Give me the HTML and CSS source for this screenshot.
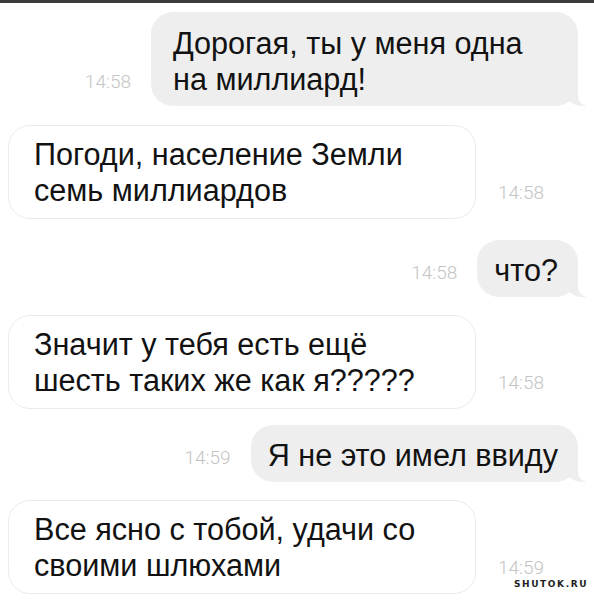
FILE: index.html
```html
<!DOCTYPE html>
<html lang="ru">
<head>
<meta charset="utf-8">
<title>Чат</title>
<link rel="stylesheet" href="styles.css">
</head>
<body>
<div class="topbar"></div>
<div class="chat">
  <div class="row row-out r1">
    <span class="time">14:58</span>
    <div class="bubble bubble-out b1">Дорогая, ты у меня одна<br>на миллиард!</div>
  </div>
  <div class="row row-in r2">
    <div class="bubble bubble-in">Погоди, население Земли<br>семь миллиардов</div>
    <span class="time">14:58</span>
  </div>
  <div class="row row-out r3">
    <span class="time">14:58</span>
    <div class="bubble bubble-out">что?</div>
  </div>
  <div class="row row-in r4">
    <div class="bubble bubble-in">Значит у тебя есть ещё<br>шесть таких же как я?????</div>
    <span class="time">14:58</span>
  </div>
  <div class="row row-out r5">
    <span class="time">14:59</span>
    <div class="bubble bubble-out">Я не это имел ввиду</div>
  </div>
  <div class="row row-in r6">
    <div class="bubble bubble-in">Все ясно с тобой, удачи со<br>своими шлюхами</div>
    <span class="time">14:59</span>
  </div>
</div>
<div class="watermark">SHUTOK.RU</div>
</body>
</html>
```
FILE: styles.css
```css
html, body {
  margin: 0;
  padding: 0;
  background: #ffffff;
}
body {
  width: 594px;
  height: 600px;
  overflow: hidden;
  position: relative;
  font-family: "Liberation Sans", Arial, sans-serif;
  color: #121212;
}
.topbar {
  height: 3px;
  background: #3a3a3a;
}
.chat {
  display: flex;
  flex-direction: column;
}
.row {
  display: flex;
  align-items: flex-end;
}
.row-out {
  justify-content: flex-end;
  padding-right: 16px;
  gap: 20px;
}
.row-in {
  justify-content: flex-start;
  padding-left: 8px;
  gap: 22px;
}
.r1 { margin-top: 9px; }
.r2 { margin-top: 19px; }
.r3 { margin-top: 21px; }
.r4 { margin-top: 18px; }
.r5 { margin-top: 16px; }
.r6 { margin-top: 18px; }

.bubble {
  position: relative;
  font-size: 30.6px;
  line-height: 36px;
  border-radius: 22px;
  white-space: nowrap;
}
.bubble-out {
  background: #eeeeee;
  padding: 12px 20px 9px 17px;
}
.bubble-out.b1 {
  width: 385px;
  padding-top: 13px;
  padding-left: 22px;
}
.bubble-out::before {
  content: "";
  position: absolute;
  right: -8px;
  bottom: 0;
  width: 20px;
  height: 22px;
  background: #eeeeee;
  border-bottom-left-radius: 16px 14px;
}
.bubble-out::after {
  content: "";
  position: absolute;
  right: -26px;
  bottom: 0;
  width: 26px;
  height: 22px;
  background: #ffffff;
  border-bottom-left-radius: 10px;
}
.bubble-in {
  background: #ffffff;
  border: 1px solid #ebebeb;
  width: 416px;
  padding: 10px 25px 10px 25px;
}
.time {
  font-family: Roboto, "Liberation Sans", sans-serif;
  font-weight: 300;
  font-size: 19px;
  color: #c4c4c4;
  line-height: 22px;
}
.row-out .time { margin-bottom: 13px; }
.row-in .time { margin-bottom: 15px; }
.watermark {
  position: absolute;
  left: 514px;
  top: 579px;
  font-family: "DejaVu Sans", sans-serif;
  font-weight: bold;
  font-size: 9px;
  letter-spacing: 1.6px;
  color: #1e1e1e;
  background: rgba(255,255,255,0.6);
}
```
